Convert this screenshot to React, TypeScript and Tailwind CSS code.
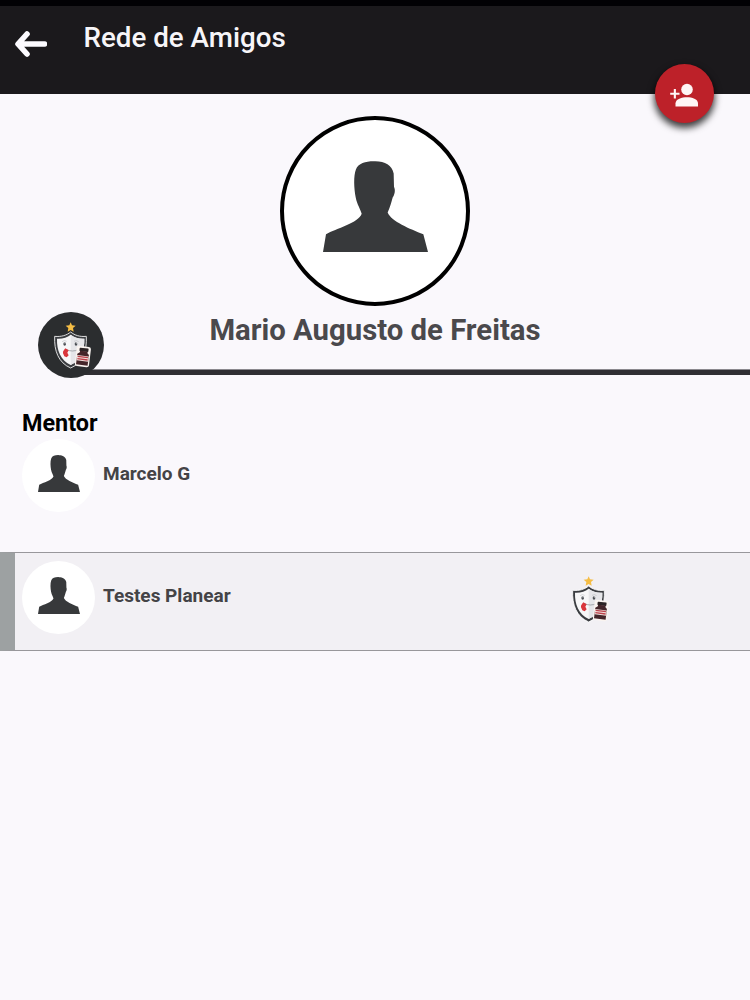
type IconProps = {
  className?: string;
};

function Silhouette({ className }: IconProps) {
  return (
    <svg viewBox="159 167 315 272" preserveAspectRatio="none" className={className} fill="#37393b">
      <path d="M159 439 L168 386 C198 370 266 352 275 325 C271 308 262 300 257 275 C252 250 250 212 258 192 C265 173 290 167 316 168 C345 168 366 180 371 204 L372 244 C377 255 374 268 368 276 C364 290 361 303 353 321 C364 348 420 370 460 386 L474 439 Z" />
    </svg>
  );
}

function ClubBadge({ className }: IconProps) {
  return (
    <svg viewBox="0 0 180 180" className={className}>
      <path
        d="M86 48 C74 58 58 63 38 61 C36 104 49 140 86 156 C123 140 135 104 133 61 C114 63 98 58 86 48 Z"
        fill="#3b3d41"
        stroke="#ffffff"
        strokeWidth="2.5"
      />
      <path
        d="M86 56 C75 64 62 69 45 68 C44 102 55 132 86 147 C117 132 128 102 127 68 C111 69 97 64 86 56 Z"
        fill="#f7f7f8"
      />
      <path d="M86 56 C97 64 111 69 127 68 C128 102 117 132 86 147 Z" fill="#e6e6e9" />
      <path
        d="M86 19 L90 28 L101 29 L93 36 L95 47 L86 42 L77 47 L79 36 L71 29 L82 28 Z"
        fill="#f5bd45"
      />
      <ellipse cx="68" cy="84" rx="4" ry="5.5" fill="#4b4f54" />
      <ellipse cx="102" cy="84" rx="4" ry="5.5" fill="#4b4f54" />
      <circle cx="69" cy="81" r="1.5" fill="#fff" />
      <circle cx="103" cy="81" r="1.5" fill="#fff" />
      <path d="M60 77 Q67 71 74 76 M96 76 Q103 71 110 77" fill="none" stroke="#b5b7bb" strokeWidth="1.5" />
      <path d="M72 100 Q90 110 112 100" fill="none" stroke="#85888c" strokeWidth="2" />
      <path d="M70 97 C66 103 62 105 63 112 L67 121 L74 124 L80 118 L76 110 L80 103 Z" fill="#d9363b" />
      <g transform="rotate(7 122 122)">
        <rect x="101" y="91" width="43" height="61" rx="7" fill="#faf4f0" />
        <rect x="110" y="96" width="27" height="10" rx="2" fill="#2c2425" />
        <path d="M112 105 H135 V110 L140 115 V147 H105 V115 L112 110 Z" fill="#45262a" />
        <rect x="105" y="119" width="35" height="16" fill="#f1e0dc" />
        <path d="M107 123 H138 M107 130 H138" stroke="#bc424b" strokeWidth="4" />
      </g>
    </svg>
  );
}

function FriendAvatar() {
  return (
    <div className="flex h-[73px] w-[73px] shrink-0 justify-center rounded-full bg-white pt-4">
      <Silhouette className="h-[37px] w-[42px]" />
    </div>
  );
}

export default function App() {
  return (
    <div className="h-[1000px] w-full overflow-hidden bg-[#faf8fc] font-['Roboto',sans-serif]">
      {/* Status bar + app bar */}
      <div className="h-1.5 bg-[#020104]" />
      <header className="relative flex h-[88px] items-start bg-[#1b191c] pl-[15px]">
        <svg viewBox="0 0 32 26" className="mt-[25px] h-[26px] w-8" fill="none" stroke="#fcfaff">
          <path
            d="M29.5 13 H4 M12 3 L3 13 L12 23"
            strokeWidth="5.6"
            strokeLinecap="round"
            strokeLinejoin="round"
          />
        </svg>
        <h1 className="ml-[36.5px] mt-[14px] text-[27.75px] font-medium leading-9 text-[#f7f5f8]">
          Rede de Amigos
        </h1>

        <button
          aria-label="Adicionar amigo"
          className="absolute right-[36.5px] top-[57.5px] h-[59px] w-[59px] rounded-full bg-[#bd2129] shadow-[0_4px_7px_1px_rgba(0,0,0,0.75)]"
        >
          <svg viewBox="0 0 59 59" className="h-full w-full" fill="#fff5f5">
            <circle cx="32" cy="25.5" r="5.8" />
            <path d="M20.5 42.5 V39.5 C20.5 35 27 33.3 32 33.3 C37 33.3 43 35 43 39.5 V42.5 Z" />
            <path d="M18.8 25 H20.9 V28.7 H24.5 V30.8 H20.9 V34.5 H18.8 V30.8 H15.2 V28.7 H18.8 Z" />
          </svg>
        </button>
      </header>

      {/* Profile */}
      <section className="relative flex h-[281px] flex-col items-center pt-[22px]">
        <div className="flex h-[190px] w-[190px] justify-center rounded-full border-[4.5px] border-black bg-white pt-[41px]">
          <Silhouette className="h-[91px] w-[105px]" />
        </div>
        <h2 className="mt-1.5 text-[29.3px] font-bold leading-9 text-[#4a494c]">
          Mario Augusto de Freitas
        </h2>
        <div className="absolute bottom-0 left-[70px] right-0 h-[6px] border-t border-[#8b898e] bg-[#302f33]" />
        <div className="absolute left-[38px] top-[218px] h-[66px] w-[66px] rounded-full bg-[#2b2d2f]">
          <ClubBadge className="ml-1 mt-1 h-[60px] w-[60px]" />
        </div>
      </section>

      {/* Mentor */}
      <section className="h-[177px] pl-[22px] pt-8">
        <h3 className="text-[23.4px] font-bold leading-8 text-black">Mentor</h3>
        <div className="flex">
          <FriendAvatar />
          <p className="ml-2 mt-[23px] text-[19px] font-bold leading-6 text-[#444346]">Marcelo G</p>
        </div>
      </section>

      {/* Friends */}
      <section className="flex h-[99px] border-y border-l-[15px] border-y-[#98979b] border-l-[#9da1a2] bg-[#f2f0f4] pl-[7px] pt-2">
        <FriendAvatar />
        <p className="ml-2 mt-[23px] text-[19px] font-bold leading-6 text-[#444346]">
          Testes Planear
        </p>
        <ClubBadge className="ml-auto mr-[130px] mt-[9px] h-[60px] w-[60px]" />
      </section>
    </div>
  );
}
